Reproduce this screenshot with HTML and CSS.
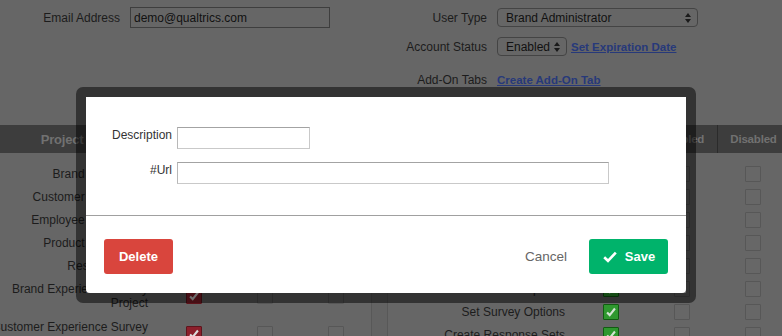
FILE: index.html
```html
<!DOCTYPE html>
<html lang="en">
<head>
<meta charset="utf-8">
<title>Edit User</title>
<link rel="stylesheet" href="styles.css">
</head>
<body>
<div class="page">
  <div class="top">
    <div class="top-left">
      <div class="field field-email">
        <label class="lbl lbl-email" for="email">Email Address</label>
        <input id="email" class="txt-email" type="text" value="demo@qualtrics.com">
      </div>
    </div>
    <div class="top-right">
      <div class="field field-r1">
        <span class="lbl lbl-r">User Type</span>
        <span class="sel sel-type">Brand Administrator<svg class="arrows" viewBox="0 0 6 10" width="6" height="10"><path d="M3 0 L6 4 H0 Z M3 10 L6 6 H0 Z" fill="#1a1a1a"/></svg></span>
      </div>
      <div class="field field-r2">
        <span class="lbl lbl-r">Account Status</span>
        <span class="sel sel-status">Enabled<svg class="arrows" viewBox="0 0 6 10" width="6" height="10"><path d="M3 0 L6 4 H0 Z M3 10 L6 6 H0 Z" fill="#1a1a1a"/></svg></span>
        <a class="link link-exp" href="#">Set Expiration Date</a>
      </div>
      <div class="field field-r3">
        <span class="lbl lbl-r">Add-On Tabs</span>
        <a class="link" href="#">Create Add-On Tab</a>
      </div>
    </div>
  </div>

  <div class="grid-wrap">
    <div class="thead">
      <div class="th th-label-l">Project Type</div>
      <div class="th">Create</div>
      <div class="th">Edit</div>
      <div class="th">Admin</div>
      <div class="th th-gap"></div>
      <div class="th th-label-r">Permission</div>
      <div class="th">Default</div>
      <div class="th">Enabled</div>
      <div class="th">Disabled</div>
    </div>
    <div class="tables">
      <div class="tbl tbl-left">
        <div class="trow"><span class="tl">Brand Experience</span><span class="cb cb-red"></span><span class="cb"></span><span class="cb"></span></div>
        <div class="trow"><span class="tl">Customer Experience</span><span class="cb cb-red"></span><span class="cb"></span><span class="cb"></span></div>
        <div class="trow"><span class="tl">Employee Experience</span><span class="cb cb-red"></span><span class="cb"></span><span class="cb"></span></div>
        <div class="trow"><span class="tl">Product Experience</span><span class="cb cb-red"></span><span class="cb"></span><span class="cb"></span></div>
        <div class="trow"><span class="tl">Research Core</span><span class="cb cb-red"></span><span class="cb"></span><span class="cb"></span></div>
        <div class="trow trow-2"><span class="tl">Brand Experience Survey Project</span><span class="cb cb-red"><svg viewBox="0 0 16 16"><path d="M3.5 8.5 L6.5 11.5 L12.5 4" fill="none" stroke="#dcdcdc" stroke-width="2.4"/></svg></span><span class="cb"></span><span class="cb"></span></div>
        <div class="trow trow-2"><span class="tl">Customer Experience Survey Project</span><span class="cb cb-red"><svg viewBox="0 0 16 16"><path d="M3.5 8.5 L6.5 11.5 L12.5 4" fill="none" stroke="#dcdcdc" stroke-width="2.4"/></svg></span><span class="cb"></span><span class="cb"></span></div>
      </div>
      <div class="tbl-gap"></div>
      <div class="tbl tbl-right">
        <div class="trow"><span class="tl">Create Projects</span><span class="cb cb-green"></span><span class="cb"></span><span class="cb"></span></div>
        <div class="trow"><span class="tl">Edit Surveys</span><span class="cb cb-green"></span><span class="cb"></span><span class="cb"></span></div>
        <div class="trow"><span class="tl">Activate Surveys</span><span class="cb cb-green"></span><span class="cb"></span><span class="cb"></span></div>
        <div class="trow"><span class="tl">Copy Surveys</span><span class="cb cb-green"></span><span class="cb"></span><span class="cb"></span></div>
        <div class="trow"><span class="tl">Edit Survey Flow</span><span class="cb cb-green"></span><span class="cb"></span><span class="cb"></span></div>
        <div class="trow"><span class="tl">Use Block Options</span><span class="cb cb-green"><svg viewBox="0 0 16 16"><path d="M3.5 8.5 L6.5 11.5 L12.5 4" fill="none" stroke="#d4e4d4" stroke-width="2.4"/></svg></span><span class="cb"></span><span class="cb"></span></div>
        <div class="trow"><span class="tl">Set Survey Options</span><span class="cb cb-green"><svg viewBox="0 0 16 16"><path d="M3.5 8.5 L6.5 11.5 L12.5 4" fill="none" stroke="#d4e4d4" stroke-width="2.4"/></svg></span><span class="cb"></span><span class="cb"></span></div>
        <div class="trow"><span class="tl">Create Response Sets</span><span class="cb cb-green"><svg viewBox="0 0 16 16"><path d="M3.5 8.5 L6.5 11.5 L12.5 4" fill="none" stroke="#d4e4d4" stroke-width="2.4"/></svg></span><span class="cb"></span><span class="cb"></span></div>
      </div>
    </div>
  </div>
</div>

<div class="modal">
  <div class="modal-inner">
    <div class="modal-body">
      <div class="mrow">
        <label class="mlbl" for="desc">Description</label>
        <input id="desc" class="minput minput-desc" type="text">
      </div>
      <div class="mrow">
        <label class="mlbl" for="url">#Url</label>
        <input id="url" class="minput minput-url" type="text">
      </div>
    </div>
    <div class="modal-foot">
      <button class="btn btn-delete" type="button">Delete</button>
      <div class="foot-right">
        <button class="btn-cancel" type="button">Cancel</button>
        <button class="btn btn-save" type="button"><svg class="save-icon" viewBox="0 0 14 12" width="14" height="12"><path d="M1.2 6.2 L5 9.8 L12.8 1.6" fill="none" stroke="#ffffff" stroke-width="2.6"/></svg>Save</button>
      </div>
    </div>
  </div>
</div>
</body>
</html>
```

FILE: styles.css
```css
* { box-sizing: border-box; }

html, body {
  margin: 0;
  padding: 0;
}

body {
  width: 782px;
  height: 336px;
  overflow: hidden;
  position: relative;
  background: #666666;
  font-family: "Liberation Sans", Arial, Helvetica, sans-serif;
  font-size: 12px;
  color: #1c1c1c;
}

.page {
  width: 782px;
  height: 336px;
  overflow: hidden;
}

/* ---------- top form ---------- */
.top {
  height: 125px;
  display: grid;
  grid-template-columns: 357px 1fr;
}

.field {
  display: flex;
  align-items: center;
}

.lbl {
  color: #1c1c1c;
  text-align: right;
}

.field-email {
  margin-top: 7px;
  height: 21px;
}

.lbl-email {
  width: 120px;
  margin-right: 10px;
}

.txt-email {
  width: 200px;
  height: 21px;
  border: 1px solid #3e3e3e;
  background: #666666;
  font-family: inherit;
  font-size: 12px;
  color: #111111;
  padding: 0 3px;
  margin: 0;
  outline: none;
}

.lbl-r {
  width: 130px;
  margin-right: 10px;
}

.field-r1 { margin-top: 8px; height: 19px; }
.field-r2 { margin-top: 10px; height: 19px; }
.field-r3 { margin-top: 14px; height: 19px; }

.sel {
  position: relative;
  height: 19px;
  border: 1px solid #444444;
  border-radius: 4px;
  padding: 0 0 0 8px;
  display: flex;
  align-items: center;
  color: #111111;
}

.sel-type { width: 201px; }
.sel-status { width: 70px; }

.arrows {
  position: absolute;
  right: 6px;
  top: 4px;
}

.link {
  color: #27397a;
  font-weight: bold;
  font-size: 11.5px;
  text-decoration: underline;
}

.link-exp { margin-left: 4px; }

/* ---------- table ---------- */
.grid-wrap {
  margin-left: -20px;
  width: 809px;
}

.thead {
  height: 28px;
  background: #3d3d3d;
  display: grid;
  grid-template-columns: 178px 71px 71px 72px 15px 188px 72px 70px 72px;
}

.th {
  display: flex;
  align-items: center;
  justify-content: center;
  color: #717171;
  font-weight: bold;
  font-size: 11.5px;
  letter-spacing: -0.2px;
  border-left: 1px solid #2b2b2b;
}

.th-label-l {
  border-left: none;
  padding-left: 18px;
  font-size: 13px;
}

.tables {
  display: flex;
  align-items: flex-start;
  padding-top: 9px;
}

.tbl {
  display: flex;
  flex-direction: column;
  min-height: 200px;
}

.tbl-left {
  width: 392px;
  border-right: 1px solid #585858;
}

.tbl-gap {
  width: 15px;
  height: 200px;
  background: #636363;
}

.tbl-right {
  width: 402px;
  border-left: 1px solid #585858;
}

.trow {
  display: grid;
  align-items: center;
  justify-items: center;
  padding: 3.5px 0;
  line-height: 14px;
}

.trow-2 {
  padding: 5px 0;
}

.tbl-left .trow { grid-template-columns: 178px 71px 71px 1fr; }
.tbl-right .trow { grid-template-columns: 1fr 72px 70px 72px; }

.tl {
  justify-self: stretch;
  text-align: right;
  padding-right: 10px;
  color: #1c1c1c;
}

.cb {
  width: 16px;
  height: 16px;
  border: 1px solid #575757;
  border-radius: 1px;
  background: #676767;
  display: block;
}

.cb svg {
  display: block;
  width: 14px;
  height: 14px;
}

.cb-red {
  background: #8c1f2b;
  border-color: #5e141c;
}

.cb-green {
  background: #2f982f;
  border-color: #115c11;
}

/* ---------- modal ---------- */
.modal {
  position: absolute;
  left: 76px;
  top: 87px;
  width: 620px;
  height: 216px;
  border: 10px solid rgba(0, 0, 0, 0.5);
  border-radius: 7px;
  background-clip: padding-box;
}

.modal-inner {
  background: #ffffff;
  width: 600px;
  height: 196px;
  border-radius: 0 0 4px 4px;
  display: flex;
  flex-direction: column;
}

.modal-body {
  padding: 30px 0 31px 0;
  border-bottom: 1px solid #a0a0a0;
  display: flex;
  flex-direction: column;
  gap: 13px;
}

.mrow {
  display: flex;
  align-items: flex-start;
}

.mlbl {
  width: 86px;
  margin-right: 5px;
  text-align: right;
  color: #333333;
  font-size: 12px;
  line-height: 15px;
  padding-top: 1px;
}

.minput {
  height: 22px;
  margin: 0;
  border: 1px solid #c9c9c9;
  border-top-color: #a3a3a3;
  border-left-color: #b8b8b8;
  background: #ffffff;
  font-family: inherit;
  font-size: 12px;
  padding: 0 4px;
  outline: none;
}

.minput-desc { width: 133px; }
.minput-url { width: 432px; }

.modal-foot {
  flex: 1;
  display: flex;
  justify-content: space-between;
  align-items: flex-start;
  padding: 23px 18px 0 18px;
}

.foot-right {
  display: flex;
  align-items: center;
}

.btn {
  height: 35px;
  border: none;
  border-radius: 3px;
  color: #ffffff;
  font-family: inherit;
  font-weight: bold;
  font-size: 13px;
  display: flex;
  align-items: center;
  justify-content: center;
  cursor: pointer;
  margin: 0;
}

.btn-delete {
  width: 69px;
  background: #d9453d;
}

.btn-save {
  width: 79px;
  background: #00b36b;
  padding: 0 0 0 1px;
}

.save-icon {
  margin-right: 8px;
}

.btn-cancel {
  background: none;
  border: none;
  padding: 0;
  margin: 0 22px 0 0;
  color: #666666;
  font-family: inherit;
  font-size: 13.5px;
  cursor: pointer;
}
```
